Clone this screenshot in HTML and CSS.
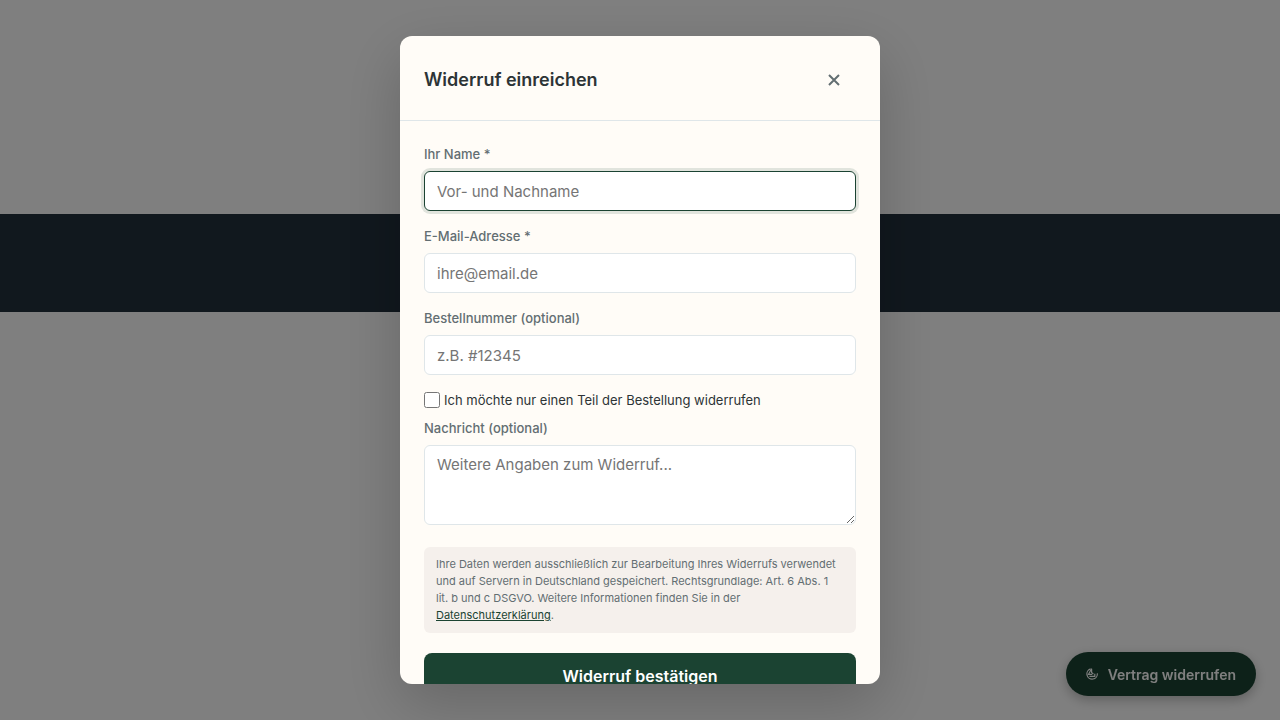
FILE: index.html
```html
<!DOCTYPE html>
<html lang="de">
<head>
    <meta charset="UTF-8">
    <meta name="viewport" content="width=device-width, initial-scale=1.0">
    <title>Widerruf einreichen</title>
    <link rel="stylesheet" href="styles.css">
</head>
<body>
    <div class="banner"></div>

    <button type="button" class="withdraw-trigger">
        <svg class="withdraw-icon" viewBox="0 0 12 12" aria-hidden="true">
            <path d="M4.6 .9A5.2 5.2 0 1 0 11.3 5.4"/>
            <path d="M5.6 .8 2.5 6.3H6.2"/>
            <path d="M5.6 .8V4.4L7.4 6.2"/>
            <path d="M3.4 8.4H8.8V5.8"/>
        </svg>
        <span>Vertrag widerrufen</span>
    </button>

    <div class="overlay">
        <div class="modal" role="dialog" aria-modal="true" aria-labelledby="modalTitle">
            <div class="modal-header">
                <h2 class="modal-title" id="modalTitle">Widerruf einreichen</h2>
                <button type="button" class="modal-close" aria-label="Schließen">
                    <svg viewBox="0 0 14 14" aria-hidden="true"><path d="M2 2l10 10M12 2L2 12"/></svg>
                </button>
            </div>
            <form class="modal-body">
                <div class="field">
                    <label for="name">Ihr Name *</label>
                    <input type="text" id="name" placeholder="Vor- und Nachname" required autofocus>
                </div>
                <div class="field">
                    <label for="email">E-Mail-Adresse *</label>
                    <input type="email" id="email" placeholder="ihre@email.de" required>
                </div>
                <div class="field">
                    <label for="order">Bestellnummer (optional)</label>
                    <input type="text" id="order" placeholder="z.B. #12345">
                </div>
                <div class="check">
                    <input type="checkbox" id="partial">
                    <label for="partial">Ich möchte nur einen Teil der Bestellung widerrufen</label>
                </div>
                <div class="field">
                    <label for="message">Nachricht (optional)</label>
                    <textarea id="message" placeholder="Weitere Angaben zum Widerruf..."></textarea>
                </div>
                <p class="privacy">Ihre Daten werden ausschließlich zur Bearbeitung Ihres Widerrufs verwendet und auf Servern in Deutschland gespeichert. Rechtsgrundlage: Art. 6 Abs. 1 lit.&nbsp;b und c DSGVO. Weitere Informationen finden Sie in der <a href="#">Datenschutzerklärung</a>.</p>
                <button type="submit" class="submit-btn">Widerruf bestätigen</button>
            </form>
        </div>
    </div>
</body>
</html>
```

FILE: styles.css
```css
* { box-sizing: border-box; }
body { margin: 0; padding-top: 214px; background: #fff; color: #2d3436; font-family: Inter, "Liberation Sans", sans-serif; }
button, input, textarea { font-family: inherit; }

.banner { height: 98px; background: #22303c; }

.withdraw-trigger { position: fixed; right: 24px; bottom: 24px; display: flex; align-items: center; gap: 10px; height: 44px; padding: 0 20px; border: none; border-radius: 22px; background: #1b4332; color: #fff; font-size: 14px; font-weight: 600; box-shadow: 0 4px 12px rgba(0, 0, 0, 0.25); cursor: pointer; }
.withdraw-icon { width: 12px; height: 12px; fill: none; stroke: currentColor; stroke-width: 1.2; }

.overlay { position: fixed; inset: 0; display: flex; align-items: center; justify-content: center; background: rgba(0, 0, 0, 0.5); }
.modal { width: 100%; max-width: 480px; max-height: 90vh; overflow-y: auto; scrollbar-width: none; background: #fffcf7; border-radius: 12px; box-shadow: 0 20px 60px rgba(0, 0, 0, 0.2); }
.modal-header { display: flex; align-items: center; justify-content: space-between; padding: 22px 24px 18px; border-bottom: 1px solid #dfe6e9; }
.modal-title { margin: 0; font-size: 18px; line-height: 24px; font-weight: 600; }
.modal-close { display: flex; align-items: center; justify-content: center; width: 44px; height: 44px; padding: 0; border: none; background: none; color: #636e72; cursor: pointer; }
.modal-close svg { width: 14px; height: 14px; fill: none; stroke: currentColor; stroke-width: 2; }

.modal-body { padding: 24px; }
.field { margin-bottom: 16px; }
.field label { display: block; margin-bottom: 8px; font-size: 13px; line-height: 18px; font-weight: 500; color: #636e72; }
.field input, .field textarea { display: block; width: 100%; height: 40px; padding: 0 12px; border: 1px solid #dfe6e9; border-radius: 6px; background: #fff; color: #2d3436; font-size: 15px; }
.field textarea { height: 80px; padding: 8px 12px; line-height: 22px; resize: vertical; }
.field input:focus, .field textarea:focus { outline: none; border-color: #1b4332; box-shadow: 0 0 0 3px rgba(27, 67, 50, 0.13); }
.field ::placeholder { color: #757575; }

.check { display: flex; align-items: center; gap: 4px; margin-bottom: 10px; font-size: 13px; line-height: 18px; }
.check input { width: 16px; height: 16px; margin: 0; }

.privacy { margin: 22px 0 20px; padding: 9px 12px; border-radius: 6px; background: #f5f0ec; color: #636e72; font-size: 11px; line-height: 17px; }
.privacy a { color: #1b4332; }
.submit-btn { width: 100%; height: 46px; border: none; border-radius: 8px; background: #1b4332; color: #fff; font-size: 16px; font-weight: 600; cursor: pointer; }
```
